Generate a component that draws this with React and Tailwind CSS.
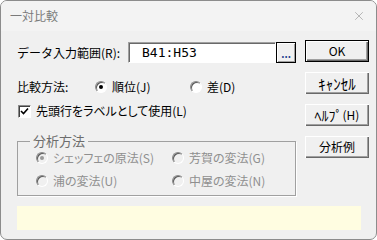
import { X } from 'lucide-react';

const Radio = ({ checked, disabled }) => (
  <span
    className={`w-[12px] h-[12px] rounded-full border border-t-[#8a8a8a] border-l-[#8a8a8a] border-r-white border-b-white shadow-[inset_1px_1px_0_#5a5a5a] flex items-center justify-center shrink-0 ${disabled ? 'bg-[#f0f0f0]' : 'bg-white'}`}
  >
    {checked && <span className={`w-[4px] h-[4px] rounded-full ${disabled ? 'bg-[#9a9a9a]' : 'bg-black'}`} />}
  </span>
);

const Btn = ({ children, primary, size = 'text-[12px]' }) => (
  <button
    className={`w-[64px] h-[22px] bg-[#f0f0f0] ${size} leading-none font-normal text-black flex items-center justify-center shadow-[inset_1px_1px_0_#fff,inset_-1px_-1px_0_#696969,inset_-2px_-2px_0_#a0a0a0] ${primary ? 'border border-black' : ''}`}
  >
    {children}
  </button>
);

const Option = ({ label, checked }) => (
  <div className="flex items-center gap-[5px] h-[14px] text-[12px] leading-none text-[#8f8f8f] [font-feature-settings:'palt']">
    <Radio checked={checked} disabled />
    <span>{label}</span>
  </div>
);

export default function App() {
  return (
    <div className="w-[377px] h-[240px] bg-white font-['Noto_Sans_CJK_JP',sans-serif]">
      <div className="w-[377px] h-[240px] bg-[#f0f0f0] border border-[#8c8c8c] rounded-[7px] overflow-hidden flex flex-col">
        {/* title bar */}
        <div className="h-[30px] bg-[#f3f3f3] flex items-center justify-between pl-[9px] pr-[10px] shrink-0">
          <span className="text-[12px] leading-none text-[#7a7a7a]">一対比較</span>
          <X className="w-[14px] h-[14px] text-[#8a8a8a]" strokeWidth={1} />
        </div>

        <div className="flex items-start">
          {/* left column */}
          <div className="w-[295px] pl-[16px] pt-[11px] flex flex-col">
            <div className="flex items-center h-[21px]">
              <span className="w-[111px] text-[12px] leading-none text-black">データ入力範囲(R):</span>
              <div className="w-[148px] h-[21px] bg-white border border-t-[#a0a0a0] border-l-[#a0a0a0] border-r-white border-b-white shadow-[inset_1px_1px_0_#696969] flex items-center pl-[13px] font-['DejaVu_Sans_Mono',monospace] text-[13px] leading-none text-black">
                B41:H53
              </div>
              <button className="w-[20px] h-[21px] bg-[#f0f0f0] border border-black shadow-[inset_1px_1px_0_#fff,inset_-1px_-1px_0_#a0a0a0] flex items-end justify-center pb-[3px] text-[10px] leading-none font-bold text-[#1f3f8f]">
                ...
              </button>
            </div>

            <div className="flex items-center h-[16px] mt-[16px] text-[12px] leading-none text-black">
              <span className="w-[78px]">比較方法:</span>
              <Radio checked />
              <span className="ml-[5px] w-[78px]">順位(J)</span>
              <Radio />
              <span className="ml-[5px]">差(D)</span>
            </div>

            <div className="flex items-center h-[14px] mt-[9px] pl-[1px] text-[12px] leading-none text-black">
              <span className="w-[13px] h-[13px] bg-white border border-t-[#8a8a8a] border-l-[#8a8a8a] border-r-white border-b-white shadow-[inset_1px_1px_0_#404040] flex items-center justify-center">
                <svg width="9" height="9" viewBox="0 0 9 9">
                  <path d="M1 4 L3.5 6.5 L8 1.5" fill="none" stroke="#000" strokeWidth="1.6" />
                </svg>
              </span>
              <span className="ml-[5px] [font-feature-settings:'palt']">先頭行をラベルとして使用(L)</span>
            </div>

            <div className="relative mt-[23px] h-[55px] border border-[#a0a0a0] shadow-[1px_1px_0_#fff] pl-[18px] pt-[9px] flex flex-col gap-[9px]">
              <span className="absolute left-[12px] top-[-8px] px-[3px] bg-[#f0f0f0] text-[13px] leading-none text-[#6d6d6d]">分析方法</span>
              <div className="flex">
                <div className="w-[136px]"><Option label="シェッフェの原法(S)" checked /></div>
                <Option label="芳賀の変法(G)" />
              </div>
              <div className="flex">
                <div className="w-[136px]"><Option label="浦の変法(U)" /></div>
                <Option label="中屋の変法(N)" />
              </div>
            </div>
          </div>

          {/* right column */}
          <div className="ml-[9px] pt-[9px] flex flex-col gap-[10px]">
            <Btn primary>OK</Btn>
            <Btn size="text-[15px]">ｷｬﾝｾﾙ</Btn>
            <Btn>
              <span className="text-[14px]">ﾍﾙﾌﾟ</span>
              <span>(H)</span>
            </Btn>
            <Btn>分析例</Btn>
          </div>
        </div>

        <div className="ml-[16px] mt-[10px] w-[344px] h-[24px] bg-[#fffde1]" />
      </div>
    </div>
  );
}
